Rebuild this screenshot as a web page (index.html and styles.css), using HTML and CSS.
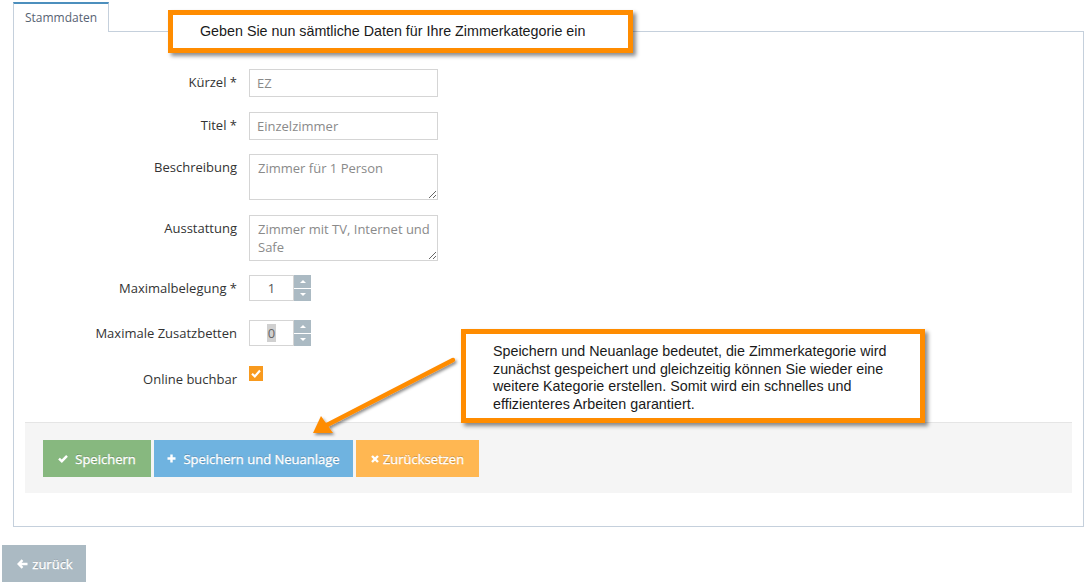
FILE: index.html
```html
<!DOCTYPE html>
<html lang="de">
<head>
<meta charset="utf-8">
<title>Zimmerkategorie</title>
<link rel="stylesheet" href="styles.css">
</head>
<body>
<div class="page">
  <div class="tabs">
    <div class="tab">Stammdaten</div>
  </div>
  <div class="panel">
    <div class="form">
      <div class="row">
        <label class="lbl">Kürzel *</label>
        <input class="txt" type="text" placeholder="EZ">
      </div>
      <div class="row">
        <label class="lbl">Titel *</label>
        <input class="txt" type="text" placeholder="Einzelzimmer">
      </div>
      <div class="row">
        <label class="lbl">Beschreibung</label>
        <textarea class="area" placeholder="Zimmer für 1 Person"></textarea>
      </div>
      <div class="row">
        <label class="lbl">Ausstattung</label>
        <textarea class="area" placeholder="Zimmer mit TV, Internet und Safe"></textarea>
      </div>
      <div class="row row-spin">
        <label class="lbl">Maximalbelegung *</label>
        <div class="spinner">
          <div class="spin-val">1</div>
          <div class="spin-btns">
            <div class="spin-btn"><span class="tri-up"></span></div>
            <div class="spin-btn"><span class="tri-down"></span></div>
          </div>
        </div>
      </div>
      <div class="row row-spin">
        <label class="lbl">Maximale Zusatzbetten</label>
        <div class="spinner">
          <div class="spin-val"><span class="sel">0</span></div>
          <div class="spin-btns">
            <div class="spin-btn"><span class="tri-up"></span></div>
            <div class="spin-btn"><span class="tri-down"></span></div>
          </div>
        </div>
      </div>
      <div class="row row-check">
        <label class="lbl">Online buchbar</label>
        <div class="check">
          <svg width="10" height="9" viewBox="0 0 10 9"><path d="M1 4.8 L3.8 7.4 L9 1.6" fill="none" stroke="#fff" stroke-width="2.2"/></svg>
        </div>
      </div>
    </div>
    <div class="actions">
      <button class="btn btn-green"><svg class="ico" width="10" height="9" viewBox="0 0 10 9"><path d="M1 4.6 L3.8 7.2 L9 1.8" fill="none" stroke="#fff" stroke-width="2.4"/></svg>Speichern</button>
      <button class="btn btn-blue"><svg class="ico" width="9" height="9" viewBox="0 0 9 9"><path d="M4.5 0.5 V8.5 M0.5 4.5 H8.5" stroke="#fff" stroke-width="2.4"/></svg>Speichern und Neuanlage</button>
      <button class="btn btn-orange"><svg class="ico ico-x" width="8" height="8" viewBox="0 0 8 8"><path d="M1 1 L7 7 M7 1 L1 7" stroke="#fff" stroke-width="2.4"/></svg>Zurücksetzen</button>
    </div>
  </div>
  <div class="back-wrap">
    <button class="btn btn-grey"><svg class="ico ico-back" width="11" height="10" viewBox="0 0 11 10"><path d="M10.5 5 H2 M5.5 1.2 L1.6 5 L5.5 8.8" fill="none" stroke="#fff" stroke-width="2.4"/></svg>zurück</button>
  </div>

  <div class="callout callout-top">Geben Sie nun sämtliche Daten für Ihre Zimmerkategorie ein</div>
  <div class="callout callout-mid">Speichern und Neuanlage bedeutet, die Zimmerkategorie wird zunächst gespeichert und gleichzeitig können Sie wieder eine weitere Kategorie erstellen. Somit wird ein schnelles und effizienteres Arbeiten garantiert.</div>
  <svg class="arrow" width="1088" height="584" viewBox="0 0 1088 584">
    <defs>
      <filter id="sh" x="-20%" y="-20%" width="140%" height="140%">
        <feDropShadow dx="1.5" dy="2" stdDeviation="1.5" flood-color="#000" flood-opacity="0.45"/>
      </filter>
    </defs>
    <g filter="url(#sh)">
      <line x1="453" y1="360" x2="327" y2="425" stroke="#ff8c00" stroke-width="4.5" stroke-linecap="round"/>
      <polygon points="313,433 321,416 333,433" fill="#ff8c00"/>
    </g>
  </svg>
</div>
</body>
</html>
```

FILE: styles.css
```css
* { box-sizing: border-box; }
html, body { margin: 0; padding: 0; background: #fff; }
body {
  font-family: "Open Sans", "Liberation Sans", sans-serif;
  font-size: 13px;
  color: #393939;
}
.page {
  position: relative;
  width: 1088px;
  height: 584px;
  padding: 2px 4px 0 13px;
  overflow: hidden;
}
.tabs { display: flex; height: 29px; }
.tab {
  width: 96px;
  height: 30px;
  border: 1px solid #c5d0dc;
  border-top: 2px solid #4c8fbd;
  border-bottom: none;
  background: #fff;
  color: #576373;
  font-size: 12px;
  line-height: 27px;
  text-align: center;
  position: relative;
  z-index: 1;
}
.panel {
  border: 1px solid #c5d0dc;
  height: 496px;
  padding: 37px 11px 0 11px;
}
.form { display: flex; flex-direction: column; }
.row { display: flex; align-items: flex-start; margin-bottom: 15px; }
.row:nth-child(2) { margin-bottom: 14px; }
.row:nth-child(4) { margin-bottom: 14px; }
.row-spin { height: 30px; }
.lbl {
  width: 212px;
  text-align: right;
  padding-top: 4px;
  line-height: 19px;
  margin-right: 12px;
  color: #333;
}
.txt, .area {
  width: 189px;
  border: 1px solid #d5d5d5;
  font-family: "Open Sans", "Liberation Sans", sans-serif;
  font-size: 13px;
  color: #858585;
  padding: 4px 7px;
  margin: 0;
  outline: none;
  background: #fff;
}
.txt { height: 28px; }
.txt::placeholder, .area::placeholder { color: #8a8a8a; opacity: 1; }
.area { height: 46px; line-height: 18px; padding: 4px 2px 4px 8px; resize: vertical; overflow: hidden; }
.spinner { display: flex; height: 26px; }
.spin-val {
  width: 45px;
  border: 1px solid #d5d5d5;
  text-align: center;
  line-height: 24px;
  color: #555;
  font-size: 13px;
}
.sel { background: #d0d0d0; color: #666; padding: 0 1px; }
.spin-btns { display: flex; flex-direction: column; width: 17px; }
.spin-btn {
  flex: 1;
  background: #abbac3;
  display: flex;
  align-items: center;
  justify-content: center;
}
.spin-btn + .spin-btn { border-top: 1px solid #fff; }
.tri-up, .tri-down { width: 0; height: 0; border-left: 3px solid transparent; border-right: 3px solid transparent; }
.tri-up { border-bottom: 3px solid #fff; }
.tri-down { border-top: 3px solid #fff; }
.row-check { margin-top: 1px; }
.check {
  width: 14px;
  height: 15px;
  background: #f89a1e;
  display: flex;
  align-items: center;
  justify-content: center;
}
.actions {
  margin-top: 18px;
  background: #f5f5f5;
  border-top: 1px solid #e5e5e5;
  height: 71px;
  padding: 17px 18px 0 18px;
  display: flex;
  gap: 3px;
  align-items: flex-start;
}
.btn {
  height: 37px;
  border: none;
  color: #fff;
  font-family: "Open Sans", "Liberation Sans", sans-serif;
  font-size: 13px;
  font-weight: 400;
  -webkit-text-stroke: 0.3px #fff;
  text-shadow: 0 -1px 0 rgba(0,0,0,0.25);
  display: flex;
  align-items: center;
  justify-content: center;
  padding: 0;
  margin: 0;
}
.ico { margin-right: 7px; }
.ico-x { margin-right: 4px; }
.ico-back { margin-right: 4px; }
.btn-green { background: #87b87f; width: 108px; }
.btn-blue { background: #6fb3e0; width: 199px; }
.btn-orange { background: #ffb752; width: 123px; }
.back-wrap { margin: 18px 0 0 -11px; }
.btn-grey { background: #abbac3; width: 84px; padding-left: 2px; }
.callout {
  position: absolute;
  background: #fff;
  border: 5px solid #ff8c00;
  box-shadow: 3px 3px 4px rgba(0,0,0,0.45);
  font-family: "Liberation Sans", Arial, sans-serif;
  font-size: 14.3px;
  color: #1a1a1a;
  padding: 0 22px 0 27px;
}
.callout-top {
  left: 168px; top: 10px; width: 465px; height: 43px;
  line-height: 33px;
}
.callout-mid {
  left: 461px; top: 329px; width: 464px; height: 94px;
  line-height: 17.5px;
  padding-top: 9px;
}
.arrow { position: absolute; left: 0; top: 0; pointer-events: none; }
```
